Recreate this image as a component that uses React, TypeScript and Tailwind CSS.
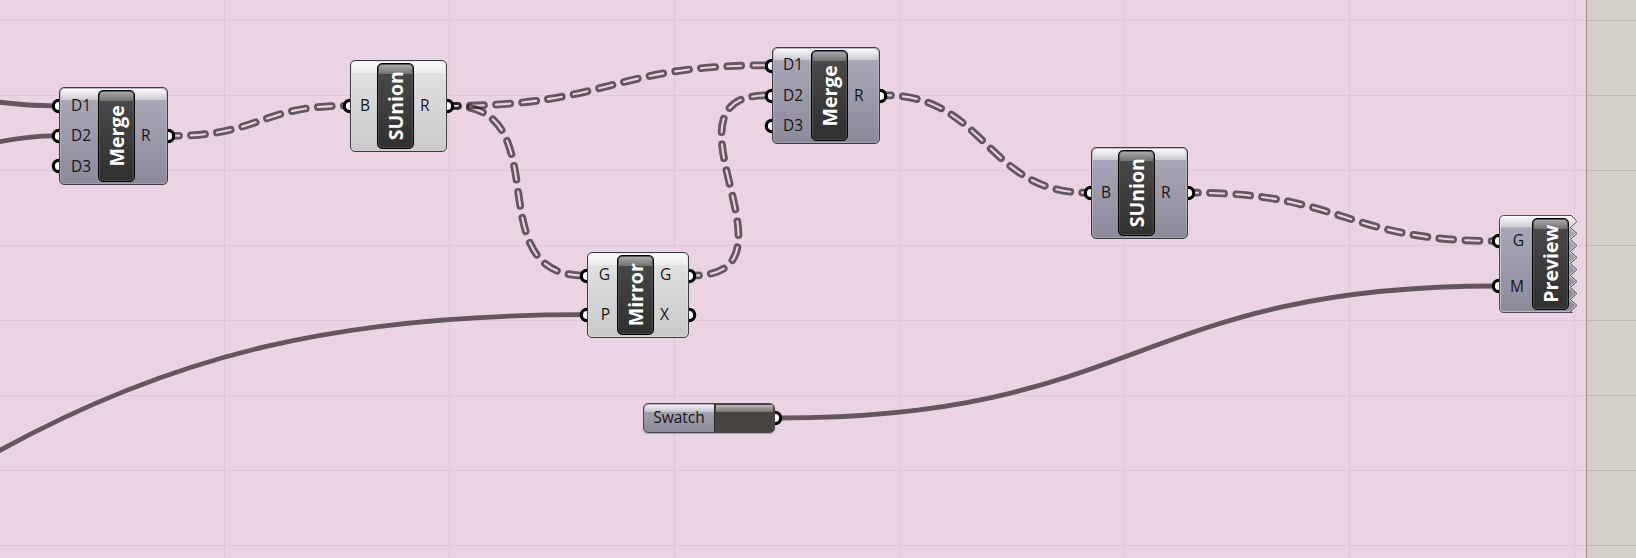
import React from "react";

type Tone = "slate" | "light";

const bodyTone: Record<Tone, string> = {
  slate: "bg-linear-to-b from-[#adabbb] to-[#8c8a9a]",
  light: "bg-linear-to-b from-[#e4e4e4] to-[#c9c9c9]",
};

const gridX = [224, 449, 674, 899, 1124, 1349, 1574];
const gridY = [20, 95, 170, 245, 320, 395, 470, 545];

const solidWires = [
  "M-2 102 C18 104.500 36 105.800 55 105.800",
  "M-2 142 C18 138 36 135.800 55 135.800",
  "M-4 452.500 C174 354 340 314.700 584 314.700",
  "M780 418 C1138 418 1138 286 1496 286",
];

const dashedWires = [
  "M173 135.800 C260 135.800 260 105.800 346 105.800",
  "M452 105.800 C610 105.800 610 65.300 767 65.300",
  "M452 105.800 C560 105.800 476 275.500 584 275.500",
  "M693 275.500 C810 275.500 650 95.300 767 95.300",
  "M885 95.300 C986 95.300 986 192.700 1087 192.700",
  "M1192 192.700 C1344 192.700 1344 241 1496 241",
];

function Wires() {
  return (
    <svg className="absolute inset-0 size-full" viewBox="0 0 1636 558" fill="none">
      {solidWires.map((d) => (
        <path key={d} d={d} stroke="#64555f" strokeWidth="4.8" />
      ))}
      {dashedWires.map((d, i) => (
        <g key={d}>
          <mask id={`wire${i}`} maskUnits="userSpaceOnUse" x="0" y="0" width="1636" height="558">
            <rect width="1636" height="558" fill="white" />
            <path d={d} stroke="black" strokeWidth="2.1" strokeLinecap="round" strokeDasharray="14 12.1" strokeDashoffset="8.200" />
          </mask>
          <path
            d={d}
            stroke="#0c0309"
            strokeOpacity="0.6"
            strokeWidth="7.7"
            strokeLinecap="round"
            strokeDasharray="14 12.1"
            strokeDashoffset="8.200"
            mask={`url(#wire${i})`}
          />
        </g>
      ))}
    </svg>
  );
}

function Port({ side, className }: { side: "left" | "right"; className: string }) {
  return (
    <svg viewBox="0 0 16 16" className={`absolute size-[16px] ${side === "left" ? "-left-[8px]" : "-right-[8px]"} ${className}`}>
      <circle cx="8" cy="8" r="5.700" fill="white" stroke="black" strokeWidth="3.2" />
    </svg>
  );
}

function Gloss({ className = "" }: { className?: string }) {
  return <span className={`absolute inset-x-px top-px bg-linear-to-b ${className}`} />;
}

function Capsule({ name }: { name: string }) {
  return (
    <div className="relative flex w-[37px] shrink-0 items-center justify-center rounded-[5px] border-[1.5px] border-black bg-linear-to-b from-[#4b4b4b] to-[#303030] shadow-[inset_0_0_0_1px_#66666680]">
      <Gloss className="h-[9px] rounded-t-[3px] from-[#a8a8a8] to-[#717171]" />
      <span className="relative -rotate-90 text-[19.500px] leading-none font-bold whitespace-nowrap text-white">
        {name}
      </span>
    </div>
  );
}

function Labels({ items, className }: { items: string[]; className: string }) {
  return (
    <div className={`relative flex flex-col justify-around text-[15.500px] leading-none text-[#161616] ${className}`}>
      {items.map((t) => (
        <span key={t}>{t}</span>
      ))}
    </div>
  );
}

interface NodeProps {
  name: string;
  tone: Tone;
  inputs: string[];
  outputs: string[];
  place: string;
  left: string;
  right: string;
  inPorts: string[];
  outPorts: string[];
}

function Node({ name, tone, inputs, outputs, place, left, right, inPorts, outPorts }: NodeProps) {
  return (
    <div className={`absolute ${place}`}>
      {inPorts.map((p) => (
        <Port key={p} side="left" className={p} />
      ))}
      {outPorts.map((p) => (
        <Port key={p} side="right" className={p} />
      ))}
      <div
        className={`relative flex size-full rounded-[5px] border border-[#3d3a42] py-[2px] shadow-[inset_0_0_0_1px_#ffffff30] ${bodyTone[tone]}`}
      >
        <Gloss className="h-[11px] rounded-t-[4px] from-[#fafafa] to-[#ffffff60]" />
        <Labels items={inputs} className={left} />
        <Capsule name={name} />
        <Labels items={outputs} className={right} />
      </div>
    </div>
  );
}

const teeth = Array.from({ length: 8 }, (_, i) => `L78 ${6.5 + i * 12} L71.5 ${12.5 + i * 12}`).join(" ");
const jagged = `M5 .5 H72.500 ${teeth} L73.500 97.500 H5 Q.5 97.500 .5 93 V5 Q.5 .5 5 .5Z`;

function Preview() {
  return (
    <div className="absolute top-[215px] left-[1499px] h-[98px] w-[79px]">
      <Port side="left" className="top-[18px]" />
      <Port side="left" className="top-[63px]" />
      <svg className="absolute inset-0 size-full" viewBox="0 0 79 98">
        <defs>
          <linearGradient id="slate" x2="0" y2="1">
            <stop stopColor="#adabbb" />
            <stop offset="1" stopColor="#8c8a9a" />
          </linearGradient>
          <linearGradient id="shine" x2="0" y2="1">
            <stop stopColor="#fafafa" />
            <stop offset="1" stopColor="#fff" stopOpacity=".4" />
          </linearGradient>
        </defs>
        <path d={jagged} fill="url(#slate)" />
        <path d="M5 1 H72 L78 6.500 L72 12.500 H1 V5 Q1 1 5 1Z" fill="url(#shine)" />
        <path d={jagged} fill="none" stroke="#fff" strokeOpacity=".4" strokeWidth="3" />
        <path d={jagged} fill="none" stroke="#3d3a42" strokeWidth=".9" />
      </svg>
      <div className="relative flex h-full py-[3px]">
        <Labels items={["G", "M"]} className="w-[33px] items-end pr-[8px]" />
        <Capsule name="Preview" />
      </div>
    </div>
  );
}

function Swatch() {
  return (
    <div className="absolute top-[403px] left-[643px] h-[30px] w-[132px]">
      <Port side="right" className="top-[7px]" />
      <div className="relative flex size-full overflow-hidden rounded-[5px] border border-[#4a464c] bg-linear-to-b from-[#adabbb] to-[#8c8a9a] shadow-[0_1px_1px_#00000040]">
        <Gloss className="h-[7px] rounded-t-[4px] from-[#f0f0f0] to-[#ffffff50]" />
        <div className="relative flex w-[70px] items-center justify-center text-[15.500px] leading-none text-[#161616]">
          Swatch
        </div>
        <div className="relative flex-1 border-l-[1.5px] border-[#29262a] bg-[#484442]">
          <Gloss className="h-[7px] from-[#b8b6b5] to-[#767371]" />
        </div>
      </div>
    </div>
  );
}

export default function App() {
  return (
    <main className="relative h-[558px] w-[1636px] overflow-hidden bg-[#d4d0c8] font-['Open_Sans','Noto_Sans',sans-serif]">
      <div className="absolute inset-y-0 left-0 w-[1587px] border-r border-[#9c9495] bg-[#ead4e4]" />
      <svg className="absolute inset-0 size-full" viewBox="0 0 1636 558">
        {gridX.map((x) => (
          <rect key={x} x={x} width="1" height="558" fill="#dfc8d9" />
        ))}
        {gridY.map((y) => (
          <g key={y}>
            <rect y={y} width="1586" height="1" fill="#dfc8d9" />
            <rect x="1587" y={y} width="49" height="1" fill="#bcb8b1" />
          </g>
        ))}
      </svg>
      <Wires />
      <Node
        name="Merge" tone="slate" inputs={["D1", "D2", "D3"]} outputs={["R"]}
        place="top-[87px] left-[59px] h-[98px] w-[109px]"
        left="w-[38px] pl-[11px]" right="flex-1 pl-[6px]"
        inPorts={["top-[11px]", "top-[41px]", "top-[71px]"]} outPorts={["top-[41px]"]}
      />
      <Node
        name="SUnion" tone="light" inputs={["B"]} outputs={["R"]}
        place="top-[60px] left-[350px] h-[92px] w-[97px]"
        left="w-[26px] pl-[9px]" right="flex-1 pl-[6px]"
        inPorts={["top-[38px]"]} outPorts={["top-[38px]"]}
      />
      <Node
        name="Mirror" tone="light" inputs={["G", "P"]} outputs={["G", "X"]}
        place="top-[252px] left-[587px] h-[86px] w-[102px]"
        left="w-[29px] items-end pr-[7px]" right="flex-1 pl-[6px]"
        inPorts={["top-[15.500px]", "top-[54.500px]"]} outPorts={["top-[15.500px]", "top-[54.500px]"]}
      />
      <Node
        name="Merge" tone="slate" inputs={["D1", "D2", "D3"]} outputs={["R"]}
        place="top-[47px] left-[772px] h-[97px] w-[108px]"
        left="w-[38px] pl-[10px]" right="flex-1 pl-[6px]"
        inPorts={["top-[10.500px]", "top-[40.500px]", "top-[70.500px]"]} outPorts={["top-[40.500px]"]}
      />
      <Node
        name="SUnion" tone="slate" inputs={["B"]} outputs={["R"]}
        place="top-[147px] left-[1091px] h-[92px] w-[97px]"
        left="w-[26px] pl-[9px]" right="flex-1 pl-[6px]"
        inPorts={["top-[38px]"]} outPorts={["top-[38px]"]}
      />
      <Preview />
      <Swatch />
    </main>
  );
}
